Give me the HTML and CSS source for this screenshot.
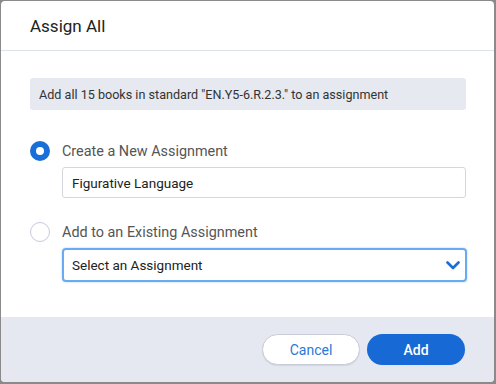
FILE: index.html
```html
<!DOCTYPE html>
<html>
<head lang="en">
    <meta charset="UTF-8">
    <title>Assign All</title>
    <link rel="stylesheet" href="styles.css">
</head>
<body>
<div class="dialog">
    <div class="dialog-head">Assign All</div>
    <div class="dialog-body">
        <div class="note">Add all 15 books in standard "EN.Y5-6.R.2.3." to an assignment</div>
        <div class="option">
            <span class="radio checked"></span>
            <span class="label">Create a New Assignment</span>
        </div>
        <div class="field">Figurative Language</div>
        <div class="option second">
            <span class="radio"></span>
            <span class="label">Add to an Existing Assignment</span>
        </div>
        <div class="field select">
            <span>Select an Assignment</span>
            <svg width="14" height="9" viewBox="0 0 14 9">
                <path d="M1.5 1.5 L7 7 L12.5 1.5" fill="none" stroke="#1a6ed8" stroke-width="2.6" stroke-linecap="round" stroke-linejoin="round"/>
            </svg>
        </div>
    </div>
    <div class="dialog-foot">
        <button class="btn cancel">Cancel</button>
        <button class="btn add">Add</button>
    </div>
</div>
</body>
</html>
```

FILE: styles.css
```css
html, body {
    margin: 0;
    height: 100%;
}

body {
    background: #8a8a8a;
    font-family: Roboto, "Liberation Sans", sans-serif;
    padding: 1px 2px 2px 1px;
    box-sizing: border-box;
}

.dialog {
    background: #fff;
    height: 100%;
    border-radius: 4px;
    display: flex;
    flex-direction: column;
    overflow: hidden;
}

.dialog-head {
    height: 49px;
    border-bottom: 1px solid #dde3ea;
    padding-left: 29px;
    display: flex;
    align-items: center;
    font-size: 17px;
    color: #222;
}

.dialog-body {
    flex: 1;
    padding: 27px 28px 0 29px;
}

.note {
    height: 32px;
    background: #e6e9f0;
    border-radius: 3px;
    padding-left: 9px;
    display: flex;
    align-items: center;
    font-size: 12.6px;
    color: #333;
}

.option {
    display: flex;
    align-items: center;
    margin-top: 31px;
}

.option.second {
    margin-top: 24px;
}

.radio {
    width: 20px;
    height: 20px;
    box-sizing: border-box;
    border-radius: 50%;
    border: 1px solid #c3cad8;
    margin-right: 12px;
}

.radio.checked {
    border: 6px solid #1a6ed8;
    background: #fff;
}

.label {
    font-size: 14.4px;
    color: #555;
}

.field {
    margin: 6px 0 0 32px;
    height: 31px;
    box-sizing: border-box;
    border: 1px solid #d4d7dd;
    border-radius: 3px;
    padding-left: 9px;
    display: flex;
    align-items: center;
    font-size: 13.5px;
    color: #222;
}

.field.select {
    height: 34px;
    border: 2px solid #6aaaf0;
    box-shadow: 0 0 2px #9cc8f5;
    border-radius: 4px;
    padding: 0 5px 0 8px;
    justify-content: space-between;
    margin-right: -1px;
}

.dialog-foot {
    height: 65px;
    background: #e5e8f0;
    display: flex;
    align-items: center;
    justify-content: flex-end;
    gap: 7px;
    padding-right: 29px;
}

.btn {
    width: 98px;
    height: 31px;
    border-radius: 16px;
    font-family: Roboto, "Liberation Sans", sans-serif;
    font-size: 14px;
    cursor: pointer;
}

.btn.cancel {
    background: #fff;
    border: 1px solid #c8ccd8;
    box-shadow: 0 1px 1px rgba(0, 0, 0, 0.08);
    color: #2a78d8;
}

.btn.add {
    background: #1769d6;
    border: 0;
    color: #fff;
    font-weight: 500;
}
```
